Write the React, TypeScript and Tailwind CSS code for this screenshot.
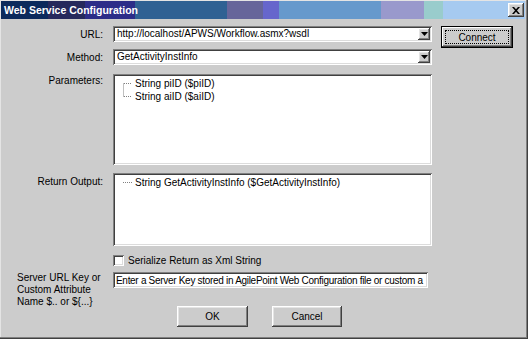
import React from "react";

const sunken =
  "bg-white shadow-[inset_1px_1px_0_#808080,inset_-1px_-1px_0_#ffffff,inset_2px_2px_0_#404040,inset_-2px_-2px_0_#dcdcdc]";
const raised =
  "bg-[#cccccc] shadow-[inset_-1px_-1px_0_#404040,inset_1px_1px_0_#ffffff,inset_-2px_-2px_0_#808080,inset_2px_2px_0_#e4e4e4]";

function Combo({ value }: { value: string }) {
  return (
    <div className={`${sunken} h-[16px] w-[319px] flex items-center pl-[4px] pr-[2px]`}>
      <span className="flex-1 truncate leading-[12px]">{value}</span>
      <span className={`${raised} w-[12px] h-[12px] flex items-center justify-center`}>
        <svg width="7" height="4" viewBox="0 0 7 4">
          <path d="M0 0h7L3.5 4z" fill="#000" />
        </svg>
      </span>
    </div>
  );
}

function Tree({ items }: { items: string[] }) {
  const h = items.length * 13;
  return (
    <div className="flex pl-[10px] pt-[3px]">
      <svg width="10" height={h} className="shrink-0">
        {items.length > 1 && (
          <line x1="0.5" y1="6.5" x2="0.5" y2={h - 6.5} stroke="#808080" strokeDasharray="1 1" />
        )}
        {items.map((_, i) => (
          <line
            key={i}
            x1={items.length > 1 ? 1 : 0}
            y1={i * 13 + 6.5}
            x2="9"
            y2={i * 13 + 6.5}
            stroke="#808080"
            strokeDasharray="1 1"
          />
        ))}
      </svg>
      <div className="ml-[2px] flex flex-col">
        {items.map((t) => (
          <div key={t} className="h-[13px] leading-[13px] whitespace-nowrap">
            {t}
          </div>
        ))}
      </div>
    </div>
  );
}

export default function App() {
  return (
    <div className="w-[528px] h-[339px] bg-[#cccccc] text-black font-['Liberation_Sans',Arial,sans-serif] text-[10px] flex flex-col pt-[1px] pl-[1px] pr-[3px] shadow-[inset_-1px_-1px_0_#404040,inset_-2px_-2px_0_#808080,inset_1px_1px_0_#e4e4e4] overflow-hidden">
      {/* title bar */}
      <div className="h-[18px] flex items-center bg-[linear-gradient(to_right,#0b2a5c_0px,#0b2a5c_47px,#26295c_47px,#26295c_84px,#2c2d88_84px,#2c2d88_134px,#2f6193_134px,#2f6193_226px,#66659a_226px,#66659a_262px,#6666cc_262px,#6666cc_278px,#6699cc_278px,#6699cc_380px,#9999cc_380px,#9999cc_423px,#99cccc_423px,#99cccc_442px,#a6caf0_442px,#a6caf0_100%)]">
        <span className="flex-1 pl-[3px] font-bold text-white text-[10.5px] leading-[18px]">
          Web Service Configuration
        </span>
        <span className={`${raised} w-[16px] h-[14px] mr-[1px] flex items-center justify-center`}>
          <svg width="8" height="7" viewBox="0 0 8 7">
            <path d="M0 0h2l2 2.2L6 0h2L5 3.5 8 7H6L4 4.8 2 7H0l3-3.5z" fill="#000" />
          </svg>
        </span>
      </div>

      {/* body */}
      <div className="flex pt-[7px]">
        <div className="flex flex-col w-[431px]">
          <div className="flex items-center h-[16px]">
            <span className="w-[102px] text-right">URL:</span>
            <div className="ml-[10px]">
              <Combo value="http://localhost/APWS/Workflow.asmx?wsdl" />
            </div>
          </div>

          <div className="flex items-center h-[16px] mt-[7px]">
            <span className="w-[102px] text-right">Method:</span>
            <div className="ml-[10px]">
              <Combo value="GetActivityInstInfo" />
            </div>
          </div>

          <div className="flex items-start mt-[9px]">
            <span className="w-[102px] text-right pt-[1px] leading-[12px]">Parameters:</span>
            <div className={`${sunken} ml-[10px] w-[319px] h-[91px]`}>
              <Tree items={["String piID ($piID)", "String aiID ($aiID)"]} />
            </div>
          </div>

          <div className="flex items-start mt-[8px]">
            <span className="w-[102px] text-right pt-[3px] leading-[12px]">Return Output:</span>
            <div className={`${sunken} ml-[10px] w-[319px] h-[73px]`}>
              <Tree items={["String GetActivityInstInfo ($GetActivityInstInfo)"]} />
            </div>
          </div>

          <div className="flex items-center mt-[9px] h-[11px]">
            <span className={`${sunken} ml-[112px] w-[11px] h-[11px]`} />
            <span className="ml-[4px] leading-[12px]">Serialize Return as Xml String</span>
          </div>

          <div className="flex items-start mt-[6px]">
            <div className="w-[112px] pl-[16px] leading-[12px]">
              Server URL Key or
              <br />
              Custom Attribute
              <br />
              Name $.. or ${"{...}"}
            </div>
            <div className="flex flex-col">
              <div className={`${sunken} w-[315px] h-[16px] flex items-center pl-[3px] overflow-hidden whitespace-nowrap tracking-[-0.3px]`}>
                Enter a Server Key stored in AgilePoint Web Configuration file or custom a
              </div>
              <div className="flex mt-[18px]">
                <button className={`${raised} ml-[64px] w-[71px] h-[21px] flex items-center justify-center`}>
                  OK
                </button>
                <button className={`${raised} ml-[24px] w-[70px] h-[21px] flex items-center justify-center`}>
                  Cancel
                </button>
              </div>
            </div>
          </div>
        </div>

        <div className="ml-[9px]">
          <button className="w-[72px] h-[22px] flex p-[4px] bg-[#cccccc] shadow-[inset_0_0_0_1px_#000000,inset_-2px_-2px_0_#404040,inset_2px_2px_0_#ffffff,inset_-3px_-3px_0_#808080]">
            <span className="flex-1 flex items-center justify-center border border-dotted border-black">
              Connect
            </span>
          </button>
        </div>
      </div>
    </div>
  );
}
